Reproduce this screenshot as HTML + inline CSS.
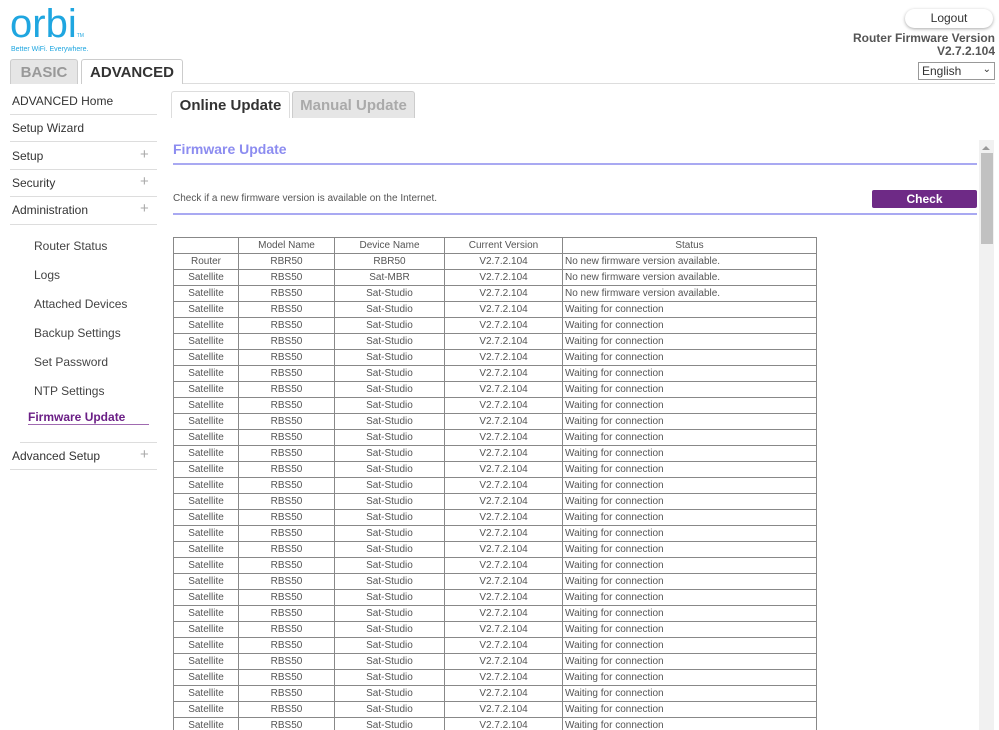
<!DOCTYPE html>
<html style="height:730px;overflow:hidden"><head><meta charset="utf-8"><style>
*{margin:0;padding:0;box-sizing:border-box}
html,body{width:999px;height:730px;overflow:hidden}
body{background:#fff;font-family:"Liberation Sans",Arial,sans-serif;position:relative;color:#333}
.a{position:absolute}
.logo{left:10px;top:2px;font-size:40px;color:#1fa6e0;letter-spacing:0px;font-weight:300}
.tag{left:11px;top:46px;font-size:7px;color:#1fa6e0}
.tab{top:59px;height:25px;border:1px solid #ccc;border-bottom:none;border-radius:3px 3px 0 0;font-weight:bold;font-size:15px;text-align:center;line-height:25px}
.nav{left:12px;font-size:12px;color:#333}
.sep{left:10px;width:147px;height:1px;background:#ddd}
.plus{left:140px;font-size:15px;color:#aaa;font-weight:300}
.sub{left:34px;font-size:12px;color:#444}
.wrap{position:absolute;left:173px;top:237px;width:650px;height:493px;overflow:hidden}
table{border-collapse:collapse;font-size:10px;color:#555}
td{border:1px solid #888;height:16px;text-align:center;padding:0;line-height:14px;white-space:nowrap}
td.s{text-align:left;padding-left:2px}
</style></head><body>
<div class="a logo">orbi<span style="font-size:5px">TM</span></div>
<div class="a tag">Better WiFi. Everywhere.</div>
<div class="a tab" style="left:10px;width:68px;background:#e6e6e6;color:#999">BASIC</div>
<div class="a tab" style="left:81px;width:102px;background:#fff;color:#333">ADVANCED</div>
<div class="a" style="left:183px;top:83px;width:812px;height:1px;background:#ddd"></div>
<div class="a" style="left:905px;top:9px;width:88px;height:19px;border-radius:10px;box-shadow:0 1px 3px #aaa;font-size:12px;text-align:center;line-height:19px;color:#333">Logout</div>
<div class="a" style="right:4px;top:32px;font-size:12px;font-weight:bold;text-align:right;color:#555;line-height:13px">Router Firmware Version<br>V2.7.2.104</div>
<div class="a" style="left:918px;top:62px;width:77px;height:18px;border:1px solid #999;font-size:12px;line-height:16px;padding-left:3px;color:#333">English<span style="position:absolute;right:3px;top:-1px;font-size:10px">⌄</span></div>

<div class="a nav" style="top:94px">ADVANCED Home</div><div class="a sep" style="top:114px"></div>
<div class="a nav" style="top:121px">Setup Wizard</div><div class="a sep" style="top:141px"></div>
<div class="a nav" style="top:149px">Setup</div><div class="a plus" style="top:146px">+</div><div class="a sep" style="top:169px"></div>
<div class="a nav" style="top:176px">Security</div><div class="a plus" style="top:173px">+</div><div class="a sep" style="top:196px"></div>
<div class="a nav" style="top:203px">Administration</div><div class="a plus" style="top:200px">+</div><div class="a sep" style="top:224px"></div>
<div class="a sub" style="top:239px">Router Status</div>
<div class="a sub" style="top:268px">Logs</div>
<div class="a sub" style="top:297px">Attached Devices</div>
<div class="a sub" style="top:326px">Backup Settings</div>
<div class="a sub" style="top:355px">Set Password</div>
<div class="a sub" style="top:384px">NTP Settings</div>
<div class="a" style="left:28px;top:410px;font-size:12px;font-weight:bold;color:#6b1f86">Firmware Update</div>
<div class="a" style="left:28px;top:424px;width:121px;height:1px;background:#a06ab0"></div>
<div class="a sep" style="left:20px;width:137px;top:442px"></div>
<div class="a nav" style="top:449px">Advanced Setup</div><div class="a plus" style="top:446px">+</div><div class="a sep" style="top:469px"></div>

<div class="a tab" style="left:171px;top:91px;width:119px;height:27px;line-height:27px;background:#fff;color:#333;border-color:#ddd">Online Update</div>
<div class="a tab" style="left:292px;top:91px;width:123px;height:27px;line-height:27px;background:#e6e6e6;color:#aaa;border-color:#ccc">Manual Update</div>
<div class="a" style="left:173px;top:141px;font-size:14px;font-weight:bold;color:#8c8cf0">Firmware Update</div>
<div class="a" style="left:173px;top:163px;width:804px;height:2px;background:#a9a9f2"></div>
<div class="a" style="left:173px;top:193px;font-size:10px;color:#555">Check if a new firmware version is available on the Internet.</div>
<div class="a" style="left:872px;top:190px;width:105px;height:18px;background:#6e2a86;border-radius:2px;color:#fff;font-weight:bold;font-size:12px;text-align:center;line-height:18px">Check</div>
<div class="a" style="left:173px;top:213px;width:804px;height:2px;background:#a9a9f2"></div>

<div class="a" style="left:979px;top:140px;width:15px;height:590px;background:#f1f1f1"></div>
<div class="a" style="left:982px;top:146px;width:0;height:0;border-left:4px solid transparent;border-right:4px solid transparent;border-bottom:4px solid #999"></div>
<div class="a" style="left:981px;top:153px;width:12px;height:91px;background:#c1c1c1"></div>

<div class="wrap"><table>
<tr><td style="width:65px"></td><td style="width:96px">Model Name</td><td style="width:110px">Device Name</td><td style="width:118px">Current Version</td><td style="width:254px">Status</td></tr>
<tr><td>Router</td><td>RBR50</td><td>RBR50</td><td>V2.7.2.104</td><td class="s">No new firmware version available.</td></tr>
<tr><td>Satellite</td><td>RBS50</td><td>Sat-MBR</td><td>V2.7.2.104</td><td class="s">No new firmware version available.</td></tr>
<tr><td>Satellite</td><td>RBS50</td><td>Sat-Studio</td><td>V2.7.2.104</td><td class="s">No new firmware version available.</td></tr>
<tr><td>Satellite</td><td>RBS50</td><td>Sat-Studio</td><td>V2.7.2.104</td><td class="s">Waiting for connection</td></tr>
<tr><td>Satellite</td><td>RBS50</td><td>Sat-Studio</td><td>V2.7.2.104</td><td class="s">Waiting for connection</td></tr>
<tr><td>Satellite</td><td>RBS50</td><td>Sat-Studio</td><td>V2.7.2.104</td><td class="s">Waiting for connection</td></tr>
<tr><td>Satellite</td><td>RBS50</td><td>Sat-Studio</td><td>V2.7.2.104</td><td class="s">Waiting for connection</td></tr>
<tr><td>Satellite</td><td>RBS50</td><td>Sat-Studio</td><td>V2.7.2.104</td><td class="s">Waiting for connection</td></tr>
<tr><td>Satellite</td><td>RBS50</td><td>Sat-Studio</td><td>V2.7.2.104</td><td class="s">Waiting for connection</td></tr>
<tr><td>Satellite</td><td>RBS50</td><td>Sat-Studio</td><td>V2.7.2.104</td><td class="s">Waiting for connection</td></tr>
<tr><td>Satellite</td><td>RBS50</td><td>Sat-Studio</td><td>V2.7.2.104</td><td class="s">Waiting for connection</td></tr>
<tr><td>Satellite</td><td>RBS50</td><td>Sat-Studio</td><td>V2.7.2.104</td><td class="s">Waiting for connection</td></tr>
<tr><td>Satellite</td><td>RBS50</td><td>Sat-Studio</td><td>V2.7.2.104</td><td class="s">Waiting for connection</td></tr>
<tr><td>Satellite</td><td>RBS50</td><td>Sat-Studio</td><td>V2.7.2.104</td><td class="s">Waiting for connection</td></tr>
<tr><td>Satellite</td><td>RBS50</td><td>Sat-Studio</td><td>V2.7.2.104</td><td class="s">Waiting for connection</td></tr>
<tr><td>Satellite</td><td>RBS50</td><td>Sat-Studio</td><td>V2.7.2.104</td><td class="s">Waiting for connection</td></tr>
<tr><td>Satellite</td><td>RBS50</td><td>Sat-Studio</td><td>V2.7.2.104</td><td class="s">Waiting for connection</td></tr>
<tr><td>Satellite</td><td>RBS50</td><td>Sat-Studio</td><td>V2.7.2.104</td><td class="s">Waiting for connection</td></tr>
<tr><td>Satellite</td><td>RBS50</td><td>Sat-Studio</td><td>V2.7.2.104</td><td class="s">Waiting for connection</td></tr>
<tr><td>Satellite</td><td>RBS50</td><td>Sat-Studio</td><td>V2.7.2.104</td><td class="s">Waiting for connection</td></tr>
<tr><td>Satellite</td><td>RBS50</td><td>Sat-Studio</td><td>V2.7.2.104</td><td class="s">Waiting for connection</td></tr>
<tr><td>Satellite</td><td>RBS50</td><td>Sat-Studio</td><td>V2.7.2.104</td><td class="s">Waiting for connection</td></tr>
<tr><td>Satellite</td><td>RBS50</td><td>Sat-Studio</td><td>V2.7.2.104</td><td class="s">Waiting for connection</td></tr>
<tr><td>Satellite</td><td>RBS50</td><td>Sat-Studio</td><td>V2.7.2.104</td><td class="s">Waiting for connection</td></tr>
<tr><td>Satellite</td><td>RBS50</td><td>Sat-Studio</td><td>V2.7.2.104</td><td class="s">Waiting for connection</td></tr>
<tr><td>Satellite</td><td>RBS50</td><td>Sat-Studio</td><td>V2.7.2.104</td><td class="s">Waiting for connection</td></tr>
<tr><td>Satellite</td><td>RBS50</td><td>Sat-Studio</td><td>V2.7.2.104</td><td class="s">Waiting for connection</td></tr>
<tr><td>Satellite</td><td>RBS50</td><td>Sat-Studio</td><td>V2.7.2.104</td><td class="s">Waiting for connection</td></tr>
<tr><td>Satellite</td><td>RBS50</td><td>Sat-Studio</td><td>V2.7.2.104</td><td class="s">Waiting for connection</td></tr>
<tr><td>Satellite</td><td>RBS50</td><td>Sat-Studio</td><td>V2.7.2.104</td><td class="s">Waiting for connection</td></tr>
<tr><td>Satellite</td><td>RBS50</td><td>Sat-Studio</td><td>V2.7.2.104</td><td class="s">Waiting for connection</td></tr>
</table></div>
</body></html>
